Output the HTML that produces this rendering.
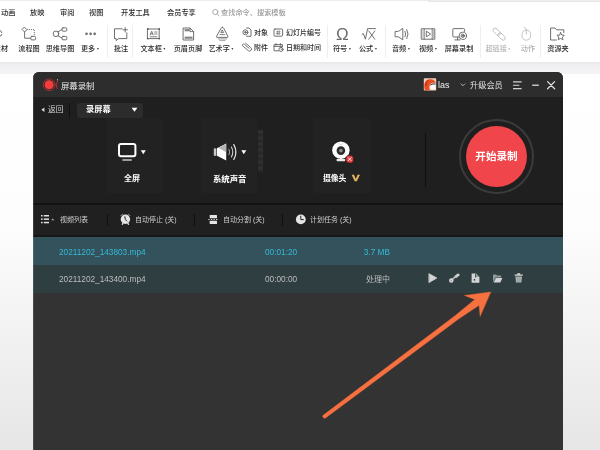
<!DOCTYPE html>
<html lang="zh-CN">
<head>
<meta charset="utf-8">
<title>屏幕录制</title>
<style>
*{margin:0;padding:0;box-sizing:border-box}
html,body{width:600px;height:450px;overflow:hidden;background:#fff}
body{position:relative;font-family:"Liberation Sans","Noto Sans CJK SC",sans-serif;color:#333}
.a{position:absolute;white-space:nowrap}
span.a{will-change:transform}
.t{will-change:transform;position:absolute;white-space:nowrap;line-height:10px;height:10px}
svg{position:absolute;overflow:visible}
/* ribbon */
#ribbon{position:absolute;left:0;top:0;width:600px;height:62px;background:#fff}
.tab{font-size:7.2px;color:#2e2e2e;top:8px;font-weight:500}
.lbl{font-size:7.15px;font-weight:500;color:#2a2a2a;top:44px;text-align:center;transform:translateX(-50%)}
.sm{font-size:7px;color:#2a2a2a;font-weight:500}
.dis{color:#b2b2b2}
.sep{position:absolute;top:25px;width:1px;height:33px;background:#eeeeee}
.arr{display:inline-block;width:0;height:0;border-left:1.5px solid transparent;border-right:1.5px solid transparent;border-top:2px solid #444;vertical-align:middle;margin-left:1.8px;position:relative;top:0px}
.dis .arr{border-top-color:#bbb}
#band{position:absolute;left:0;top:62px;width:600px;height:12px;background:linear-gradient(#e6e6e9,#f0f0f3 3px,#f4f4f6)}
#pagebg{position:absolute;left:0;top:74px;width:600px;height:376px;background:linear-gradient(#ffffff,#fdfdfd 40%,#e6e6e6)}
/* window */
#win{position:absolute;left:33px;top:72px;width:530px;height:378px;background:#333333;border-radius:6px 6px 0 0;overflow:hidden}
#title{position:absolute;left:0;top:0;width:530px;height:25px;background:#2d2d2d}
#main{position:absolute;left:0;top:25px;width:530px;height:107px;background:#1f1f1f}
#line1{position:absolute;left:0;top:131.2px;width:530px;height:1.6px;background:#121212}
#tool{position:absolute;left:0;top:133px;width:530px;height:31px;background:#202020}
#line2{position:absolute;left:0;top:163px;width:530px;height:1.5px;background:#171717}
#row1{position:absolute;left:0;top:164.5px;width:530px;height:28.5px;background:#34525b}
#row2{position:absolute;left:0;top:193px;width:530px;height:27.5px;background:#2e3e41}
.w{color:#fff}
</style>
</head>
<body>

<div id="ribbon">
  <div class="a" style="left:428px;top:0;width:172px;height:2px;background:#e6e6e6"></div>
  <div class="a" style="left:0;top:0;width:600px;height:1px;background:#ececec"></div>
  <!-- tabs -->
  <span class="t tab" style="left:0.8px">动画</span>
  <span class="t tab" style="left:30px">放映</span>
  <span class="t tab" style="left:60px">审阅</span>
  <span class="t tab" style="left:89px">视图</span>
  <span class="t tab" style="left:120.5px">开发工具</span>
  <span class="t tab" style="left:166.5px">会员专享</span>
  <span class="t tab" style="left:220.5px;color:#9a9a9a">查找命令、搜索模板</span>
  <!-- separators -->
  <div class="sep" style="left:107px"></div>
  <div class="sep" style="left:132.3px"></div>
  <div class="sep" style="left:327px"></div>
  <div class="sep" style="left:385px"></div>
  <div class="sep" style="left:480px"></div>
  <div class="sep" style="left:540px"></div>
  <!-- big labels -->
  <span class="t lbl" style="left:1px">素材</span>
  <span class="t lbl" style="left:28.5px">流程图</span>
  <span class="t lbl" style="left:60px">思维导图</span>
  <span class="t lbl" style="left:89.8px">更多<i class="arr"></i></span>
  <span class="t lbl" style="left:120.5px">批注</span>
  <span class="t lbl" style="left:152.6px">文本框<i class="arr"></i></span>
  <span class="t lbl" style="left:188px">页眉页脚</span>
  <span class="t lbl" style="left:221.3px">艺术字<i class="arr"></i></span>
  <span class="t lbl" style="left:342.1px">符号<i class="arr"></i></span>
  <span class="t lbl" style="left:368.3px">公式<i class="arr"></i></span>
  <span class="t lbl" style="left:401.0px">音频<i class="arr"></i></span>
  <span class="t lbl" style="left:428.0px">视频<i class="arr"></i></span>
  <span class="t lbl" style="left:459.3px">屏幕录制</span>
  <span class="t lbl dis" style="left:498.2px">超链接<i class="arr"></i></span>
  <span class="t lbl dis" style="left:527.7px">动作</span>
  <span class="t lbl" style="left:557.5px">资源夹</span>
  <!-- small labels -->
  <span class="t sm" style="left:254px;top:27.5px">对象</span>
  <span class="t sm" style="left:254px;top:42.5px">附件</span>
  <span class="t sm" style="left:285.5px;top:27.5px">幻灯片编号</span>
  <span class="t sm" style="left:285.5px;top:42.5px">日期和时间</span>
  <!-- icons -->
  <svg width="600" height="62" viewBox="0 0 600 62" style="left:0;top:0" fill="none" stroke="#606060" stroke-width="0.9" stroke-linecap="round" stroke-linejoin="round">
    <!-- search -->
    <circle cx="215.3" cy="12" r="2.6" stroke="#999" stroke-width="0.8"/>
    <path d="M217.2,14 L219.2,16" stroke="#999" stroke-width="0.8"/>
    <!-- sucai partial -->
    <path d="M0,30.5 q2,0.5 1.8,2.2 M0,36 q2,0 1.8,-1.5" />
    <!-- flowchart -->
    <path d="M24.6,27.4 L26.9,29.7 L24.6,32 L22.3,29.7 Z"/>
    <path d="M27.2,29.6 H34.3 V36" stroke-dasharray="1 0.9" stroke-linecap="butt"/>
    <rect x="30.8" y="36.4" width="4.8" height="3.5" rx="1"/>
    <path d="M24.6,32.2 V38.2 H30.6"/>
    <!-- mindmap -->
    <circle cx="56" cy="33.8" r="2.8"/>
    <rect x="62" y="27.8" width="4.8" height="3.4" rx="1"/>
    <rect x="62" y="36.4" width="4.8" height="3.4" rx="1"/>
    <path d="M58,31.8 L61.8,29.6 M58,35.8 L61.8,38"/>
    <!-- more -->
    <g fill="#707070" stroke="none"><circle cx="86.5" cy="33.8" r="1.35"/><circle cx="90.6" cy="33.8" r="1.35"/><circle cx="94.7" cy="33.8" r="1.35"/></g>
    <!-- comment -->
    <path d="M122,28.8 H114.5 V38.6 H116.2 V40.6 L118.6,38.6 H126.8 V32.8"/>
    <path d="M123,29.8 H127.4 M125.2,27.6 V32"/>
    <!-- textbox -->
    <rect x="147.8" y="29" width="11.4" height="9.6"/>
    <g fill="#5a5a5a" stroke="none"><circle cx="147.8" cy="29" r="0.9"/><circle cx="159.2" cy="29" r="0.9"/><circle cx="147.8" cy="38.6" r="0.9"/><circle cx="159.2" cy="38.6" r="0.9"/></g>
    <path d="M150.2,35 L151.7,31.2 L153.2,35 M150.8,33.8 H152.6 M154.6,32 H157 M154.6,34 H157 M150.2,36.8 H157" stroke-width="0.8"/>
    <!-- header footer -->
    <path d="M183.5,28 H190 L193.6,31.6 V40 H183.5 Z"/>
    <path d="M190,28 V31.6 H193.6" stroke-width="0.8"/>
    <g fill="#858585" stroke="none"><rect x="184.6" y="29.1" width="5.2" height="2.2"/><rect x="184.6" y="36.6" width="7.9" height="2.2"/></g>
    <!-- wordart -->
    <path d="M222.4,27.3 q0.9,0 1.3,0.9 L227.9,36.4 q0.4,1 -0.7,1 H217.2 q-1.1,0 -0.7,-1 L221.1,28.2 q0.4,-0.9 1.3,-0.9 Z"/>
    <path d="M222.4,30.2 L223.6,32.6 H221.2 Z M220,34.6 H224.8" stroke-width="0.8"/>
    <path d="M218.2,38.9 H226.6 M219.8,40.4 H225" stroke="#8a8a8a" stroke-width="0.8"/>
    <!-- object -->
    <path d="M246.6,28 H249 L251,30 V36.3 H246.6"/>
    <circle cx="245.4" cy="32.3" r="2.5"/>
    <circle cx="245.4" cy="32.3" r="0.8" fill="#5a5a5a"/>
    <!-- attachment -->
    <path d="M243.6,44.8 H250.4 a2,2 0 0 1 0,4 H243.3 a1.15,1.15 0 0 1 0,-2.3 H249.6" stroke-width="0.8" transform="rotate(40 246.85 46.8)"/>
    <!-- slide number -->
    <rect x="274" y="29" width="8.6" height="7.2" rx="1"/>
    <path d="M276.6,31.8 H280.2 M276.4,33.6 H280 M277.6,30.8 L277.2,34.6 M279.4,30.8 L279,34.6" stroke-width="0.6"/>
    <!-- date time -->
    <path d="M278.6,50.8 H274 V44.6 H282.4 V46.6 M274,46.4 H282.4 M276,43.6 V45.2 M280.4,43.6 V45.2" stroke-width="0.9"/>
    <circle cx="281" cy="49.4" r="2.1" stroke-width="0.9"/>
    <path d="M281,48.2 V49.5 H282" stroke-width="0.6"/>
    <!-- formula -->
    <path d="M362,34.4 L363.4,33.6 L365.4,39.2 L367.6,28.6 H375.4"/>
    <path d="M368.8,31 L374.8,39.2 M374.8,31 L368.8,39.2"/>
    <!-- audio -->
    <path d="M395.5,31.4 H398.4 L402.8,28.4 V39.8 L398.4,36.8 H395.5 Z"/>
    <path d="M405,31.4 q1.4,2.6 0,5.4 M406.8,29.6 q2.6,4.4 0,9"/>
    <!-- video -->
    <rect x="421.6" y="28.8" width="13.2" height="10.4"/>
    <path d="M424.2,28.8 V39.2 M432.2,28.8 V39.2" stroke-width="0.8"/>
    <path d="M422.9,30.4 V37.8 M433.5,30.4 V37.8" stroke-width="0.9" stroke-dasharray="1 1.1" stroke-linecap="butt"/>
    <path d="M426.6,31.4 L430.6,34 L426.6,36.6 Z" stroke-width="0.9"/>
    <!-- screen record -->
    <path d="M458.6,37 H453.8 q-1,0 -1,-1 V29.6 q0,-1 1,-1 H463.6 q1,0 1,1 V31.4"/>
    <path d="M457.6,37.2 V39.8 M454.8,39.9 H460"/>
    <circle cx="462.8" cy="35.8" r="3.7"/>
    <circle cx="462.8" cy="35.8" r="1.7"/>
    <circle cx="462.8" cy="35.8" r="0.5" fill="#5a5a5a"/>
    <!-- hyperlink (disabled) -->
    <g stroke="#bdbdbd" stroke-width="0.9">
      <rect x="492.3" y="29.6" width="8.6" height="4.2" rx="2.1" transform="rotate(45 496.6 31.7)"/>
      <rect x="497.3" y="34.4" width="8.6" height="4.2" rx="2.1" transform="rotate(45 501.6 36.5)"/>
    </g>
    <!-- action (disabled) -->
    <g stroke="#bdbdbd">
      <rect x="522" y="30" width="8.6" height="10.2" rx="4.3"/>
      <path d="M526.3,30 V34.2 M526.3,30 q0.2,-1.6 -1.2,-2 q-1,-0.3 -1.4,-1"/>
    </g>
    <!-- resource folder -->
    <path d="M556.4,40 H550.6 V28 H555 L556.6,29.8 H563.8 V32.6"/>
    <path d="M560.6,32.6 L561.7,35 L564.3,35.3 L562.4,37.1 L562.9,39.7 L560.6,38.4 L558.3,39.7 L558.8,37.1 L556.9,35.3 L559.5,35 Z" stroke-width="0.9"/>
  </svg>
  <span class="a" style="left:335.8px;top:24.7px;font-size:17px;line-height:20px;color:#6a6a6a">Ω</span>
</div>

<div id="band"></div>
<div id="pagebg"></div>
<div id="win">
  <div id="title"></div>
  <div id="main"></div>
  <div class="a" style="left:72.5px;top:45.5px;width:56.5px;height:75px;background:#222222"></div>
  <div class="a" style="left:168px;top:45.5px;width:56px;height:75px;background:#222222"></div>
  <div class="a" style="left:279.5px;top:45.5px;width:57.5px;height:75px;background:#222222"></div>
  <div id="line1"></div>
  <div id="tool"></div>
  <div id="line2"></div>
  <div id="row1"></div>
  <div id="row2"></div>
  <div class="a" style="left:0;top:0;width:1px;height:378px;background:rgba(255,255,255,0.12)"></div>

  <!-- title bar -->
  <span class="t" style="left:28px;top:8.5px;font-size:8.4px;color:#e8e8e8">屏幕录制</span>
  <span class="t" style="left:405.4px;top:8px;font-size:9px;color:#f0f0f0">las</span>
  <span class="t" style="left:437px;top:8.5px;font-size:8.2px;color:#e0e0e0">升级会员</span>

  <!-- sub bar -->
  <span class="t" style="left:14.6px;top:33px;font-size:7.7px;color:#d6d6d6">返回</span>
  <div class="a" style="left:36px;top:31px;width:1px;height:15px;background:#111"></div>
  <div class="a" style="left:44px;top:30.5px;width:66px;height:15px;background:#2c2c2c;border-radius:3px"></div>
  <span class="t w" style="left:53px;top:33px;font-size:8.2px;font-weight:700">录屏幕</span>

  <!-- main labels -->
  <span class="t w" style="left:90.5px;top:101.5px;font-size:8px;font-weight:700">全屏</span>
  <span class="t w" style="left:180px;top:101.5px;font-size:8.4px;font-weight:700">系统声音</span>
  <span class="t w" style="left:289.5px;top:101.5px;font-size:7.8px;font-weight:700">摄像头</span>
  <span class="t" style="left:318.6px;top:100.9px;font-size:9.6px;font-weight:700;color:#e9b664;-webkit-text-stroke:0.45px #e9b664;transform:scaleX(1.18);transform-origin:0 50%">V</span>
  <div class="a" style="left:392px;top:61px;width:1px;height:54px;background:#0e0e0e"></div>

  <!-- record button -->
  <div class="a" style="left:426px;top:46.5px;width:75px;height:75px;border-radius:50%;border:2px solid #3b3b3b;background:#1f1f1f"></div>
  <div class="a" style="left:433px;top:53.5px;width:61px;height:61px;border-radius:50%;background:#f0454a"></div>
  <span class="t w" style="left:442px;top:79px;font-size:10.6px;font-weight:700;width:43px;text-align:center">开始录制</span>

  <!-- toolbar -->
  <span class="t" style="left:27px;top:142.5px;font-size:7px;color:#cfcfcf">视频列表</span>
  <div class="a" style="left:74px;top:141.5px;width:1px;height:12px;background:#0f0f0f"></div>
  <span class="t" style="left:101.5px;top:142.5px;font-size:7px;color:#cfcfcf">自动停止 (关)</span>
  <div class="a" style="left:161px;top:141.5px;width:1px;height:12px;background:#0f0f0f"></div>
  <span class="t" style="left:189.5px;top:142.5px;font-size:7px;color:#cfcfcf">自动分割 (关)</span>
  <div class="a" style="left:249px;top:141.5px;width:1px;height:12px;background:#0f0f0f"></div>
  <span class="t" style="left:276.5px;top:142.5px;font-size:7px;color:#cfcfcf">计划任务 (关)</span>

  <!-- rows -->
  <span class="t" style="left:26px;top:175.5px;font-size:8.25px;color:#35b9d8">20211202_143803.mp4</span>
  <span class="t" style="left:231.5px;top:175.5px;font-size:8.25px;color:#35b9d8">00:01:20</span>
  <span class="t" style="left:257px;width:100px;text-align:right;top:175.5px;font-size:8.25px;color:#35b9d8">3.7 MB</span>
  <span class="t" style="left:26px;top:203px;font-size:8.25px;color:#bdbdbd">20211202_143400.mp4</span>
  <span class="t" style="left:231.5px;top:203px;font-size:8.25px;color:#bdbdbd">00:00:00</span>
  <span class="t" style="left:257px;width:100px;text-align:right;top:203px;font-size:8px;color:#bdbdbd">处理中</span>

  <svg width="530" height="378" viewBox="33 72 530 378" style="left:0;top:0" fill="none" stroke-linecap="round" stroke-linejoin="round">
    <!-- logo -->
    <circle cx="49.1" cy="84.8" r="4.5" fill="#f73c3e"/>
    <circle cx="49.1" cy="84.8" r="5.9" stroke="#d93035" stroke-width="0.7"/>
    <path d="M57.5,80.8 Q54.9,84.8 57.2,88.8" stroke="#d93035" stroke-width="0.8"/>
    <circle cx="57.5" cy="79.8" r="0.55" fill="#eee"/>
    <!-- avatar -->
    <rect x="423.8" y="78.2" width="12.4" height="12.3" rx="0.8" fill="#f1cdbd" stroke="none"/>
    <path d="M424.4,88.6 C423.8,82.6 426.6,79.2 430.4,79.2 C433.6,79.3 435.5,81 435.7,83.2 C433.2,82.4 431.2,83 430,84.6 C428.8,86.4 429.2,88.4 429.8,90.2 L425.2,90.2 Z" fill="#e6521f" stroke="none"/>
    <path d="M424.6,85.5 C424.6,82 426.6,79.6 429.6,79.4 C427.6,81 426.6,83 426.8,86.4 Z" fill="#d6321c" stroke="none"/>
    <path d="M430.2,85.2 q2.4,-1.8 5.4,-1 v5.4 h-4.8 z" fill="#fbfbfb" stroke="none"/>
    <path d="M430.6,84.9 q2.2,-1.6 4.6,-0.9" stroke="#2c2c3a" stroke-width="0.9"/>
    <!-- chevron -->
    <path d="M461.1,83.9 L462.9,85.8 L464.7,83.9" stroke="#bdbdbd" stroke-width="0.9"/>
    <!-- menu -->
    <path d="M513,81.8 H521.6 M513,85.2 H519.4 M513,88.6 H521.6" stroke="#d4d4d4" stroke-width="1.15" stroke-linecap="butt"/>
    <!-- minimize -->
    <path d="M532.2,85.2 H538.8" stroke="#dcdcdc" stroke-width="1.3" stroke-linecap="butt"/>
    <!-- close -->
    <path d="M547.6,81.6 L554.6,88.8 M554.6,81.6 L547.6,88.8" stroke="#e2e2e2" stroke-width="1.25"/>
    <!-- back triangle -->
    <path d="M44.4,107.6 V112 L41.4,109.8 Z" fill="#e0e0e0" stroke="none"/>
    <!-- dropdown triangle -->
    <path d="M131.6,107.8 H137.4 L134.5,111.8 Z" fill="#fff" stroke="none"/>
    <!-- monitor -->
    <rect x="119" y="144" width="16.4" height="12.2" rx="2" stroke="#fff" stroke-width="2"/>
    <path d="M122.4,160 H131.8" stroke="#bcbcbc" stroke-width="1.6" stroke-linecap="butt"/>
    <path d="M140.8,150.2 H145.8 L143.3,154.2 Z" fill="#fff" stroke="none"/>
    <!-- speaker -->
    <path d="M213.8,148.4 H216.4 V155.8 H213.8 Z" fill="#c8c8c8" stroke="none"/>
    <path d="M217,148.2 L226.2,143.6 V160.4 L217,155.8 Z" fill="#fff" stroke="none"/>
    <path d="M218.4,147.8 L226.2,143.8 V152.2 Z" fill="#b4b4b4" stroke="none"/>
    <path d="M229,149.2 q1.6,2.8 0,5.6" stroke="#aaa" stroke-width="1"/>
    <path d="M231.4,147 q2.8,5 0,10" stroke="#cfcfcf" stroke-width="1.1"/>
    <path d="M233.8,144.6 q4.2,7.4 0,14.8" stroke="#e6e6e6" stroke-width="1.2"/>
    <path d="M241.3,150.2 H246.3 L243.8,154.2 Z" fill="#fff" stroke="none"/>
    <!-- level meter -->
    <rect x="258.2" y="129.8" width="4.8" height="42.1" fill="#1c1c1c" stroke="none"/>
    <path d="M258.75,129.9 V171.9 M259.95,129.9 V171.9 M261.15,129.9 V171.9 M262.35,129.9 V171.9" stroke="#545454" stroke-width="0.75" stroke-dasharray="0.7 0.5" stroke-linecap="butt"/>
    <!-- camera -->
    <rect x="336.6" y="159" width="8.6" height="2.2" rx="0.6" fill="#e8e8e8" stroke="none"/>
    <circle cx="340.9" cy="150.2" r="8.7" fill="#fff" stroke="none"/>
    <circle cx="340.9" cy="150.6" r="4.3" fill="#2a2a2a" stroke="none"/>
    <circle cx="340.9" cy="150.6" r="1.9" fill="#8a8a8a" stroke="none"/>
    <path d="M338.6,143.4 L340.9,145.2 L343.2,143.4" stroke="#bbb" stroke-width="0.6"/>
    <circle cx="349.7" cy="159.2" r="3.9" fill="#ef3b40" stroke="#222" stroke-width="0.6"/>
    <path d="M348.3,157.8 L351.1,160.6 M351.1,157.8 L348.3,160.6" stroke="#fff" stroke-width="0.9"/>
    <!-- list icon -->
    <g fill="#e2e2e2" stroke="none">
      <rect x="41" y="215" width="1.6" height="1.5"/><rect x="43.8" y="215" width="5.2" height="1.5"/>
      <rect x="41" y="218.4" width="1.6" height="1.5"/><rect x="43.8" y="218.4" width="5.2" height="1.5"/>
      <rect x="41" y="221.8" width="1.6" height="1.5"/><rect x="43.8" y="221.8" width="5.2" height="1.5"/>
      <path d="M51.4,220.2 L52.8,218.4 L54.2,220.2 Z" fill="#bbb"/>
    </g>
    <!-- alarm icon -->
    <g>
      <circle cx="125.4" cy="219.2" r="4.7" fill="#e4e4e4" stroke="none"/>
      <path d="M121,215.6 L122.6,214.4 M129.8,215.6 L128.2,214.4" stroke="#8c8c8c" stroke-width="1.1"/>
      <path d="M122.3,224.3 L123.1,223 M128.5,224.3 L127.7,223" stroke="#e4e4e4" stroke-width="1.3"/>
      <path d="M124.9,216.8 L125.4,219.6 L126.8,221" stroke="#222" stroke-width="1"/>
    </g>
    <!-- split icon -->
    <g fill="#e4e4e4" stroke="none">
      <rect x="209.7" y="214.9" width="7.3" height="3.4" rx="0.5"/>
      <rect x="209.7" y="220.7" width="7.3" height="3.4" rx="0.5"/>
      <g fill="#bdbdbd"><rect x="208.2" y="219" width="1.5" height="1"/><rect x="210.8" y="219" width="1.5" height="1"/><rect x="213.4" y="219" width="1.5" height="1"/><rect x="216" y="219" width="1.5" height="1"/></g>
    </g>
    <!-- clock icon -->
    <circle cx="300.8" cy="219.4" r="4.9" fill="#e4e4e4" stroke="none"/>
    <path d="M300.8,216.2 V219.6 H303.4" stroke="#222" stroke-width="1"/>
    <!-- row action icons -->
    <g fill="#d4d4d4" stroke="none">
      <path d="M429.2,273.8 L436.8,278 L429.2,282.4 Z" stroke="#d4d4d4" stroke-width="0.8"/>
      <path d="M455.8,276.6 L458.2,274.9" stroke="#d4d4d4" stroke-width="2.7" fill="none"/>
      <path d="M452.6,279.2 L456,276.4" stroke="#bcbcbc" stroke-width="1.5" fill="none"/>
      <circle cx="451.3" cy="280.5" r="2.25"/>
      <circle cx="451.2" cy="280.7" r="0.6" fill="#7d8688"/>
      <!-- file -->
      <path d="M471.6,273.6 H476 L479.4,277 V282.8 H471.6 Z"/>
      <path d="M476,273.6 L479.4,277 H476 Z" fill="#8d9799"/>
      <path d="M475.5,273.6 V277.6" stroke="#2e3e41" stroke-width="0.8" stroke-linecap="butt"/>
      <rect x="473.8" y="279" width="1.4" height="1.6" fill="#2e3e41"/>
      <!-- folder -->
      <path d="M493,282.2 V275 q0,-0.6 0.6,-0.6 H496 L497,275.6 H500.6 q0.6,0 0.6,0.6 V277.4 H495.6 L493,282.2 Z" fill="#8f999b"/>
      <path d="M493.6,282.6 L495.9,277.9 H502.4 L500.3,282.6 Z"/>
      <!-- trash -->
      <path d="M514.6,274.6 H522.8 V275.8 H514.6 Z M517.2,273.2 H520.2 V274.4 H517.2 Z"/>
      <path d="M515.4,276.6 H522 L521.4,282.6 H516 Z" fill="#adb3b4"/>
      <path d="M517.6,277.8 V281.4 M519.8,277.8 V281.4" stroke="#7f898b" stroke-width="0.6" fill="none"/>
    </g>
    <!-- arrow -->
    <path d="M490.7,292.0 L464.5,295.4 L474.8,299.4 L455.6,315.3 L323.4,415.1 A1.8,1.8 0 0 0 325.5,418.0 L458.5,319.1 L479.1,305.2 L480.1,316.2 Z" fill="#f7703f" stroke="#f7703f" stroke-width="0.4"/>
  </svg>
</div>
</body>
</html>
